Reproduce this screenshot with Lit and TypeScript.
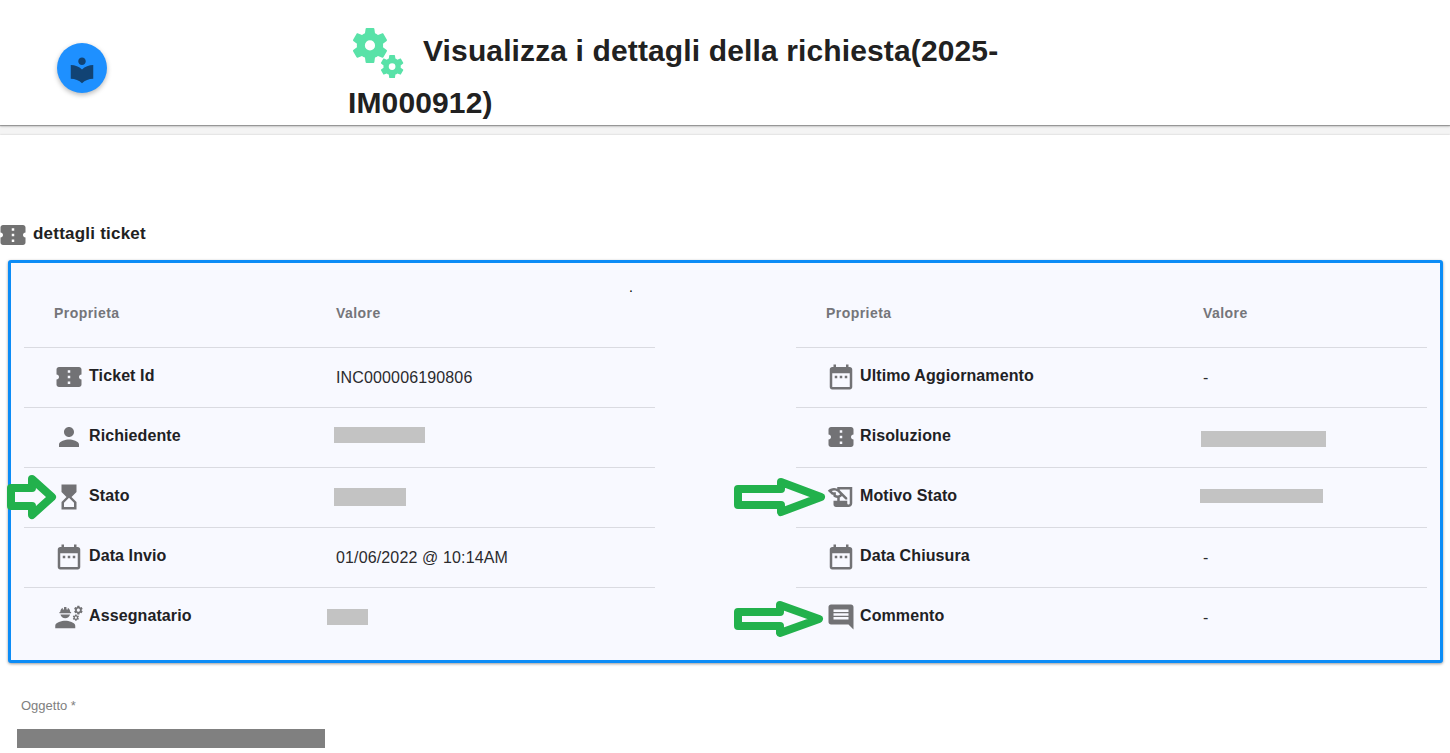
import { LitElement, html, svg, css, nothing } from "lit";
import { customElement, property } from "lit/decorators.js";
import { styleMap } from "lit/directives/style-map.js";

const GEAR =
  "M19.14 12.94c.04-.3.06-.61.06-.94 0-.32-.02-.64-.07-.94l2.03-1.58c.18-.14.23-.41.12-.61l-1.92-3.32c-.12-.22-.37-.29-.59-.22l-2.39.96c-.5-.38-1.03-.7-1.62-.94l-.36-2.54c-.04-.24-.24-.41-.48-.41h-3.84c-.24 0-.43.17-.47.41l-.36 2.54c-.59.24-1.13.57-1.62.94l-2.39-.96c-.22-.08-.47 0-.59.22L2.74 8.87c-.12.21-.08.47.12.61l2.03 1.58c-.05.3-.09.63-.09.94s.02.64.07.94l-2.03 1.58c-.18.14-.23.41-.12.61l1.92 3.32c.12.22.37.29.59.22l2.39-.96c.5.38 1.03.7 1.62.94l.36 2.54c.05.24.24.41.48.41h3.84c.24 0 .44-.17.47-.41l.36-2.54c.59-.24 1.13-.56 1.62-.94l2.39.96c.22.08.47 0 .59-.22l1.92-3.32c.12-.22.07-.47-.12-.61l-2.01-1.58zM12 14.8a2.8 2.8 0 1 1 0-5.6 2.8 2.8 0 0 1 0 5.6z";

const ICONS: Record<string, string> = {
  ticket:
    "M22 10V6c0-1.11-.9-2-2-2H4c-1.1 0-1.99.89-1.99 2v4c1.1 0 1.99.9 1.99 2s-.89 2-2 2v4c0 1.1.9 2 2 2h16c1.1 0 2-.9 2-2v-4c-1.1 0-2-.9-2-2s.9-2 2-2zm-9 7.5h-2v-2h2v2zm0-4.5h-2v-2h2v2zm0-4.5h-2v-2h2v2z",
  person:
    "M12 12c2.21 0 4-1.79 4-4s-1.79-4-4-4-4 1.79-4 4 1.79 4 4 4zm0 2c-2.67 0-8 1.34-8 4v2h16v-2c0-2.66-5.33-4-8-4z",
  hourglass:
    "M6 2l.01 6L10 12l-3.99 4.01L6 22h12v-6l-4-4 4-3.99V2H6zm10 14.5V20H8v-3.5l4-4 4 4z",
  date:
    "M9 11H7v2h2v-2zm4 0h-2v2h2v-2zm4 0h-2v2h2v-2zm2-7h-1V2h-2v2H8V2H6v2H5c-1.11 0-1.99.9-1.99 2L3 20c0 1.1.89 2 2 2h14c1.1 0 2-.9 2-2V6c0-1.1-.9-2-2-2zm0 16H5V9h14v11z",
  engineer:
    "M9 15c-2.67 0-8 1.34-8 4v2h16v-2C17 16.34 11.67 15 9 15z M22.1 6.84c.01-.11.02-.22.02-.34 0-.12-.01-.23-.03-.34l.74-.58c.07-.05.08-.15.04-.22l-.7-1.21c-.04-.08-.14-.1-.21-.08l-.86.35c-.18-.14-.38-.25-.59-.34l-.13-.93c-.02-.09-.09-.15-.18-.15h-1.4c-.09 0-.16.06-.17.15l-.13.93c-.21.09-.41.21-.59.34l-.87-.35c-.08-.03-.17 0-.21.08l-.7 1.21c-.04.08-.03.17.04.22l.74.58c-.02.11-.03.23-.03.34 0 .11.01.23.03.34l-.74.58c-.07.05-.08.15-.04.22l.7 1.21c.04.08.14.1.21.08l.87-.35c.18.14.38.25.59.34l.13.93c.01.09.08.15.17.15h1.4c.09 0 .16-.06.17-.15l.13-.93c.21-.09.41-.21.59-.34l.87.35c.08.03.17 0 .21-.08l.7-1.21c.04-.08.03-.17-.04-.22L22.1 6.84z M19.5 7.75c-.69 0-1.25-.56-1.25-1.25s.56-1.25 1.25-1.25 1.25.56 1.25 1.25-.56 1.25-1.25 1.25z M19.92 11.68l-.5-.87c-.03-.06-.1-.08-.15-.06l-.62.25c-.13-.1-.27-.18-.42-.24l-.09-.66c-.02-.06-.08-.1-.14-.1h-1c-.06 0-.11.04-.12.11l-.09.66c-.15.06-.29.15-.42.24l-.62-.25c-.06-.02-.12 0-.15.06l-.5.87c-.03.06-.02.12.03.16l.53.41c-.01.08-.02.16-.02.24 0 .08.01.17.02.24l-.53.41c-.05.04-.06.11-.03.16l.5.87c.03.06.1.08.15.06l.62-.25c.13.1.27.18.42.24l.09.66c.01.07.06.11.12.11h1c.06 0 .12-.04.12-.11l.09-.66c.15-.06.29-.15.42-.24l.62.25c.06.02.12 0 .15-.06l.5-.87c.03-.06.02-.12-.03-.16l-.52-.41c.01-.08.02-.16.02-.24 0-.08-.01-.17-.02-.24l.53-.41c.05-.04.06-.11.03-.16z M17.5 13.33c-.46 0-.83-.38-.83-.83 0-.46.38-.83.83-.83s.83.38.83.83c0 .46-.37.83-.83.83z M4.74 9h8.53c.27 0 .49-.22.49-.49v-.02c0-.27-.22-.49-.49-.49H13c0-1.48-.81-2.75-2-3.45v.95c0 .28-.22.5-.5.5S10 5.78 10 5.5V4.14C9.68 4.06 9.35 4 9 4s-.68.06-1 .14V5.5C8 5.78 7.78 6 7.5 6S7 5.78 7 5.5V4.55C5.81 5.25 5 6.52 5 8H4.74c-.27 0-.49.22-.49.49v.02c0 .27.22.49.49.49z M9 13c1.86 0 3.41-1.28 3.86-3H5.14C5.59 11.72 7.14 13 9 13z",
  history:
    "M9 4v1.38c-.83-.33-1.72-.5-2.61-.5-1.79 0-3.58.68-4.95 2.05l3.33 3.33h1.11v1.11c.86.86 1.98 1.31 3.11 1.36V15H6v3c0 1.1.9 2 2 2h10c1.66 0 3-1.34 3-3V4H9zm-1.11 6.41V8.26H5.61L4.57 7.22a5.07 5.07 0 0 1 1.82-.34c1.34 0 2.59.52 3.54 1.46l1.41 1.41-.2.2a2.7 2.7 0 0 1-1.92.8c-.47 0-.93-.12-1.33-.34zM19 17c0 .55-.45 1-1 1s-1-.45-1-1v-2h-6v-2.59c.57-.23 1.1-.57 1.56-1.03l.2-.2L15.59 14H17v-1.41l-6-5.97V6h8v11z",
  comment:
    "M21.99 4c0-1.1-.89-2-1.99-2H4c-1.1 0-2 .9-2 2v12c0 1.1.9 2 2 2h14l4 4-.01-18zM18 14H6v-2h12v2zm0-3H6V9h12v2zm0-3H6V6h12v2z",
  library:
    "M12 11.55C9.64 9.35 6.48 8 3 8v11c3.48 0 6.64 1.35 9 3.55 2.36-2.19 5.52-3.55 9-3.55V8c-3.48 0-6.64 1.35-9 3.55zM12 8c1.66 0 3-1.34 3-3s-1.34-3-3-3-3 1.34-3 3 1.34 3 3 3z",
};

const icon = (name: string) => html`
  <svg class="icon" viewBox="0 0 24 24" width="30" height="30" fill="currentColor">
    ${svg`<path fill-rule="evenodd" d=${ICONS[name]}></path>`}
  </svg>
`;

/** A covered value: offset in its cell, then size. */
interface Mask {
  dx: number;
  dy: number;
  w: number;
  h: number;
}

interface Row {
  icon: string;
  label: string;
  value?: string;
  mask?: Mask;
}

const LEFT: Row[] = [
  { icon: "ticket", label: "Ticket Id", value: "INC000006190806" },
  { icon: "person", label: "Richiedente", mask: { dx: -2, dy: 19, w: 91, h: 16 } },
  { icon: "hourglass", label: "Stato", mask: { dx: -2, dy: 20, w: 72, h: 18 } },
  { icon: "date", label: "Data Invio", value: "01/06/2022 @ 10:14AM" },
  { icon: "engineer", label: "Assegnatario", mask: { dx: -9, dy: 21, w: 41, h: 16 } },
];

const RIGHT: Row[] = [
  { icon: "date", label: "Ultimo Aggiornamento", value: "-" },
  { icon: "ticket", label: "Risoluzione", mask: { dx: -2, dy: 23, w: 125, h: 16 } },
  { icon: "history", label: "Motivo Stato", mask: { dx: -3, dy: 21, w: 123, h: 14 } },
  { icon: "date", label: "Data Chiusura", value: "-" },
  { icon: "comment", label: "Commento", value: "-" },
];

@customElement("property-table")
class PropertyTable extends LitElement {
  @property({ attribute: false }) rows: Row[] = [];

  static styles = css`
    :host {
      display: block;
    }
    .row {
      display: grid;
      grid-template-columns: var(--label-width) 1fr;
      height: 59px;
      border-bottom: 1px solid #dadbe1;
    }
    .row:last-child {
      border-bottom: 0;
    }
    .head {
      height: 84px;
      font-size: 14px;
      font-weight: bold;
      line-height: 20px;
      letter-spacing: 0.45px;
      color: #75757a;
    }
    .head span {
      padding-top: 40px;
    }
    .head .first {
      padding-left: 30px;
    }
    .label {
      display: flex;
      gap: var(--icon-gap, 5px);
      padding-left: 30px;
      font-size: 16px;
      font-weight: bold;
      line-height: 20px;
      letter-spacing: 0.1px;
      color: #212124;
      white-space: nowrap;
    }
    .label span {
      padding-top: 18px;
    }
    .icon {
      flex: none;
      margin-top: 14px;
      color: #727275;
    }
    .value {
      display: flex;
      align-items: flex-start;
      font-size: 16px;
      line-height: 20px;
      letter-spacing: 0.14px;
      color: #2b2b2e;
    }
    .value span {
      padding-top: 20px;
    }
    .mask {
      background: #c3c3c3;
    }
  `;

  render() {
    return html`
      <div class="row head"><span class="first">Proprieta</span><span>Valore</span></div>
      ${this.rows.map(
        (r) => html`
          <div class="row">
            <div class="label">${icon(r.icon)}<span>${r.label}</span></div>
            <div class="value">
              ${r.value ? html`<span>${r.value}</span>` : nothing}
              ${r.mask
                ? html`<div
                    class="mask"
                    style=${styleMap({
                      width: `${r.mask.w}px`,
                      height: `${r.mask.h}px`,
                      marginLeft: `${r.mask.dx}px`,
                      marginTop: `${r.mask.dy}px`,
                    })}
                  ></div>`
                : nothing}
            </div>
          </div>
        `
      )}
    `;
  }
}

@customElement("app-root")
class AppRoot extends LitElement {
  static styles = css`
    :host {
      display: block;
      position: relative;
      height: 753px;
      overflow: hidden;
      background: #f4f4f4;
      font-family: "Liberation Sans", Arial, sans-serif;
      color: #212121;
    }
    .toolbar {
      display: flex;
      height: 125px;
      background: #fff;
      box-shadow: 0 1px 1px rgba(0, 0, 0, 0.3), 0 2px 2px rgba(0, 0, 0, 0.12);
    }
    .fab {
      box-sizing: border-box;
      display: flex;
      justify-content: center;
      width: 50px;
      height: 50px;
      margin: 43px 0 0 57px;
      padding-top: 12px;
      border-radius: 50%;
      background: #1e90ff;
      color: #114374;
      box-shadow: 0 2px 5px rgba(0, 0, 0, 0.28);
    }
    h1 {
      width: 754px;
      margin: 25px 0 0 241px;
      font-size: 30px;
      font-weight: bold;
      line-height: 52px;
      letter-spacing: 0.13px;
    }
    .gears {
      float: left;
      width: 60px;
      height: 52px;
      margin: -2px 15px 0 0;
      overflow: visible;
      fill: #59e2a8;
    }
    .line {
      display: block;
      white-space: nowrap;
    }
    .content {
      margin-top: 10px;
      height: 618px;
      background: #fff;
      box-shadow: 0 0 2px rgba(0, 0, 0, 0.18);
      overflow: hidden;
    }
    .section {
      display: flex;
      gap: 5px;
      margin: 85px 0 0 -2px;
      height: 40px;
      color: #727272;
    }
    .section h2 {
      margin: 4px 0 0;
      font-size: 17px;
      line-height: 20px;
      letter-spacing: 0.22px;
      color: #212121;
    }
    .panel {
      box-sizing: border-box;
      display: flex;
      justify-content: space-between;
      width: 1435px;
      height: 403px;
      margin-left: 8px;
      padding: 0 13px;
      border: 3px solid #0c8cf6;
      border-radius: 3px;
      background: #f8f9ff;
      box-shadow: 0 1px 3px rgba(0, 0, 0, 0.4);
    }
    .left,
    .right {
      width: 631px;
    }
    .left {
      --label-width: 312px;
    }
    .right {
      --label-width: 407px;
      --icon-gap: 4px;
    }
    .field {
      margin: 33px 0 0 21px;
      font-size: 13px;
      line-height: 20px;
      color: #808080;
    }
    .input {
      width: 308px;
      height: 19px;
      margin: 13px 0 0 17px;
      background: #808080;
    }
    .marks {
      position: absolute;
      left: 0;
      top: 0;
      fill: none;
      stroke: #22b14c;
      stroke-width: 8;
      stroke-linejoin: round;
    }
    .dot {
      position: absolute;
      left: 629px;
      top: 279px;
      font-size: 14px;
      line-height: 16px;
      color: #000;
    }
  `;

  render() {
    return html`
      <header class="toolbar">
        <div class="fab">${icon("library")}</div>
        <h1>
          <svg class="gears" viewBox="0 0 60 52">
            <path fill-rule="evenodd" transform="translate(0.1 0.6) scale(1.823)" d=${GEAR}></path>
            <path fill-rule="evenodd" transform="translate(29.7 29.2) scale(1.2)" d=${GEAR}></path>
          </svg>
          <span class="line">Visualizza i dettagli della richiesta(2025-</span>
          <span class="line">IM000912)</span>
        </h1>
      </header>
      <main class="content">
        <div class="section">
          ${icon("ticket")}
          <h2>dettagli ticket</h2>
        </div>
        <section class="panel">
          <property-table class="left" .rows=${LEFT}></property-table>
          <property-table class="right" .rows=${RIGHT}></property-table>
        </section>
        <div class="field">Oggetto *</div>
        <div class="input"></div>
      </main>
      <span class="dot">.</span>
      <svg class="marks" width="1450" height="753" viewBox="0 0 1450 753">
        <path d="M11 488H32V479L52 497L32 515V506H11Z"></path>
        <path d="M738 489H781V482L821 497L781 512V505H738Z"></path>
        <path d="M738 612H780V605L819 619L780 633V626H738Z"></path>
      </svg>
    `;
  }
}
